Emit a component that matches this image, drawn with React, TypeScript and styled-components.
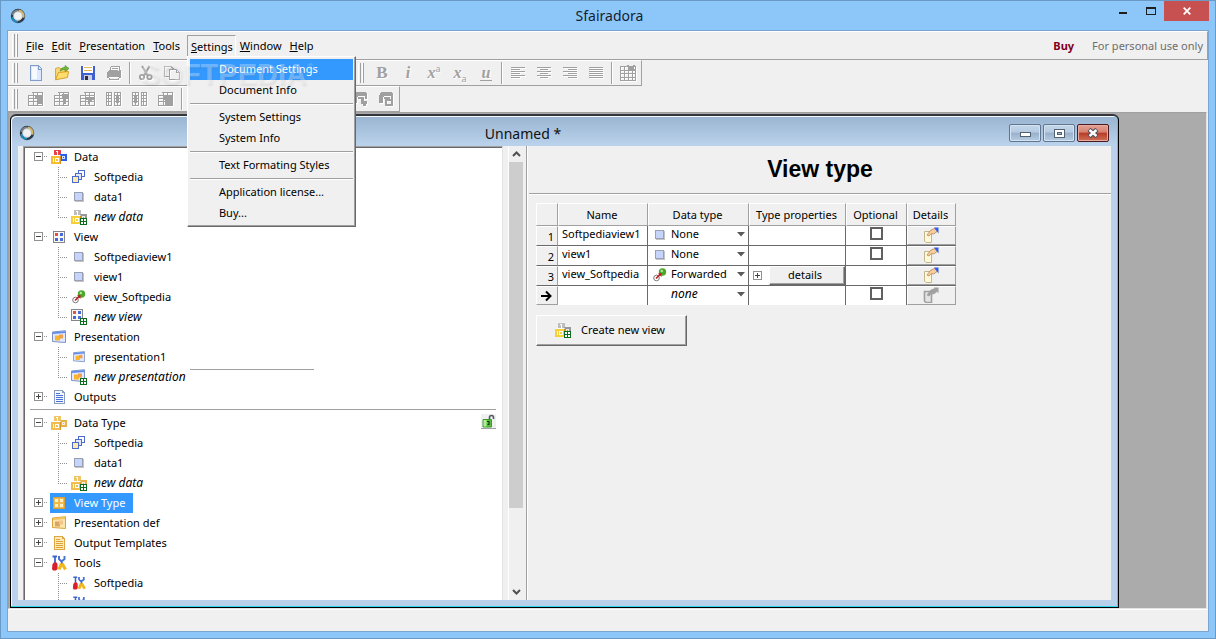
import React, { useState } from "react";
import styled, { createGlobalStyle, css } from "styled-components";

const UI_FONT = '"Noto Sans", "Open Sans", sans-serif';

const GlobalStyle = createGlobalStyle`
  * { box-sizing: border-box; }
  html, body { margin: 0; padding: 0; }
  body { font-family: ${UI_FONT}; font-size: 11px; line-height: 16px; color: #000; background: #8dc7fa; }
  button, input, select { font: inherit; color: inherit; margin: 0; border-radius: 0; }
  svg { display: block; flex: none; }
  ul { list-style: none; margin: 0; padding: 0; }
`;

/* ---------- application frame ---------- */

const Frame = styled.div`
  display: flex;
  flex-direction: column;
  height: 100vh;
  padding: 0 6px 6px;
  border: 1px solid #6a99c6;
  background: #8dc7fa;
  overflow: hidden;
`;

const TitleBar = styled.header`
  display: grid;
  grid-template-columns: 1fr auto 1fr;
  flex: none;
  height: 29px;
  padding-left: 3px;
`;

const TitleIcon = styled.div`
  display: flex;
  align-items: center;
`;

const AppTitle = styled.h1`
  margin: 0;
  font-size: 14px;
  font-weight: 400;
  line-height: 30px;
  color: #15222e;
`;

const CaptionButtons = styled.div`
  display: flex;
  justify-content: flex-end;
`;

const CaptionButton = styled.button<{ $close?: boolean }>`
  display: flex;
  align-items: center;
  justify-content: center;
  width: ${(p) => (p.$close ? 45 : 27)}px;
  height: 20px;
  padding: 0;
  border: 0;
  background: ${(p) => (p.$close ? "#c75050" : "transparent")};
`;

const Client = styled.div`
  display: flex;
  flex-direction: column;
  flex: 1;
  min-height: 0;
  border: 1px solid #7aa5cf;
  background: #f0f0f0;
`;

/* ---------- bars ---------- */

const Grip = styled.div`
  flex: none;
  width: 6px;
  margin: 2px 0 2px 4px;
  border: solid;
  border-width: 0 1px 0 1px;
  border-color: #fff #a0a0a0 #a0a0a0 #fff;
  background: linear-gradient(90deg, transparent 1px, #a0a0a0 1px, #a0a0a0 2px, #f0f0f0 2px, #f0f0f0 3px, #fff 3px);
`;

const MenuBar = styled.nav`
  position: relative;
  display: flex;
  flex: none;
  height: 29px;
  border-top: 1px solid #fff;
  border-bottom: 1px solid #a0a0a0;
  border-right: 1px solid #a0a0a0;
`;

const MenuList = styled.div`
  display: flex;
  flex: 1;
  align-items: center;
  padding-left: 4px;
`;

const MenuButton = styled.button<{ $open?: boolean }>`
  display: block;
  height: 22px;
  padding: ${(p) => (p.$open ? "0 2px 0 3px" : "0 3px")};
  border: 1px solid transparent;
  border-color: ${(p) => (p.$open ? "#a0a0a0 #fff #f0f0f0 #a0a0a0" : "transparent")};
  background: transparent;
  line-height: ${(p) => (p.$open ? 22 : 20)}px;
  white-space: nowrap;
  &::first-letter { text-decoration: underline; }
`;

const MenuHolder = styled.div`
  position: relative;
  margin-left: 3px;
`;

const Dropdown = styled.div`
  position: absolute;
  z-index: 5;
  top: 21px;
  left: 0;
  width: 169px;
  padding: 2px;
  border: 1px solid #fff;
  border-color: #fff #696969 #696969 #fff;
  box-shadow: inset -1px -1px 0 #a0a0a0;
  background: #f0f0f0;
`;

const DropItem = styled.button<{ $active?: boolean }>`
  display: block;
  width: 163px;
  height: 21px;
  padding: 0 0 0 29px;
  border: 0;
  background: ${(p) => (p.$active ? "#3399ff" : "transparent")};
  color: ${(p) => (p.$active ? "#fff" : "#000")};
  text-align: left;
  line-height: 20px;
  white-space: nowrap;
`;

const DropRule = styled.hr`
  height: 2px;
  margin: 2px 0;
  border: 0;
  border-top: 1px solid #a0a0a0;
  border-bottom: 1px solid #fff;
`;

const Watermark = styled.div`
  position: absolute;
  z-index: 6;
  top: 26px;
  left: 133px;
  font: bold 29px/32px "Liberation Sans", Arial, sans-serif;
  color: rgba(255, 255, 255, 0.3);
  text-shadow: 1px 2px 2px rgba(80, 80, 80, 0.1);
  pointer-events: none;
  sup { font-size: 9px; font-weight: 400; line-height: 0; vertical-align: 14px; }
`;

const MenuNotes = styled.div`
  display: flex;
  align-items: center;
  gap: 18px;
  padding-right: 4px;
  color: #6d6d6d;
`;

const BuyLink = styled.a`
  color: #800020;
  font-weight: 700;
  text-decoration: none;
`;

const BarRow = styled.div`
  display: flex;
  flex: none;
`;

const ToolBar = styled.div`
  display: flex;
  height: 26px;
  border: 1px solid #a0a0a0;
  border-width: 0 1px 1px 0;
  border-top: 1px solid #fff;
`;

const Tools = styled.div`
  display: flex;
  margin-left: 5px;
`;

const ToolButton = styled.button`
  display: flex;
  align-items: center;
  justify-content: center;
  width: 26px;
  height: 24px;
  padding: 0;
  border: 0;
  background: transparent;
`;

const ToolDivider = styled.span`
  width: 2px;
  height: 22px;
  margin: 1px 2px;
  border-left: 1px solid #a0a0a0;
  border-right: 1px solid #fff;
`;

/* ---------- document area ---------- */

const Desktop = styled.main`
  display: flex;
  flex: 1;
  min-height: 0;
  margin-right: 1px;
  padding: 1px 87px 0 1px;
  border: 1px solid #a0a0a0;
  border-color: #a0a0a0 #e3e3e3 #e3e3e3 #a0a0a0;
  background: #ababab;
`;

const ChildWindow = styled.section`
  display: flex;
  flex: 1;
  flex-direction: column;
  min-width: 0;
  padding: 0 7px 7px 7px;
  border: 1px solid #000;
  border-top: 2px solid #33373c;
  border-radius: 6px 6px 0 0;
  box-shadow: inset -1px -1px 0 #2cd4ec, inset 1px 1px 0 #f2f7fc;
  background: linear-gradient(#99b4d1, #b9d1ea 28px, #b9d1ea);
`;

const ChildTitle = styled.div`
  display: flex;
  flex: none;
  align-items: center;
  height: 30px;
  padding: 4px 2px 0 1px;
`;

const ChildName = styled.h2`
  flex: 1;
  margin: 0 0 0 2px;
  padding-top: 1px;
  font-size: 14px;
  line-height: 20px;
  font-weight: 400;
  text-align: center;
  color: #111;
`;

const GlassButtons = styled.div`
  display: flex;
  gap: 2px;
`;

const GlassButton = styled.button<{ $close?: boolean }>`
  display: flex;
  align-items: center;
  justify-content: center;
  width: 32px;
  height: 18px;
  padding: 0;
  border: 1px solid ${(p) => (p.$close ? "#4b1a20" : "#5f7590")};
  border-radius: 2px;
  box-shadow: inset 0 0 0 1px ${(p) => (p.$close ? "#e8aba0" : "#d5e3f1")};
  background: ${(p) =>
    p.$close
      ? "linear-gradient(#e3a194 0, #d68272 45%, #b93c25 50%, #cf6f58 100%)"
      : "linear-gradient(#c4d7ea 0, #b5cbe2 45%, #98b0cb 50%, #b6cde4 100%)"};
`;

const Panes = styled.div`
  display: flex;
  flex: 1;
  min-height: 0;
  padding-left: 5px;
  background: #f0f0f0;
`;

const TreePane = styled.div`
  position: relative;
  flex: none;
  width: 480px;
  overflow: hidden;
  border: 1px solid #a0a0a0;
  border-color: #a0a0a0 #e3e3e3 transparent #a0a0a0;
  border-bottom: 0;
  box-shadow: inset 1px 1px 0 #696969;
  background: #fff;
`;

const TreeSection = styled.ul<{ $first?: boolean }>`
  padding-left: 1px;
  ${(p) =>
    !p.$first &&
    css`
      margin: 2px 6px 0 6px;
      padding: 3px 0 0 0;
      border-top: 1px solid #a0a0a0;
      & > li { margin-left: -5px; }
    `}
`;

const TreeRow = styled.li<{ $child?: boolean }>`
  display: flex;
  height: 20px;
  padding-left: ${(p) => (p.$child ? 25 : 9)}px;
`;

const TreeButton = styled.button<{ $selected?: boolean; $italic?: boolean }>`
  display: flex;
  align-items: center;
  height: 20px;
  padding: 0 8px 0 0;
  border: 0;
  background: ${(p) => (p.$selected ? "#3399ff" : "transparent")};
  color: ${(p) => (p.$selected ? "#fff" : "#000")};
  font-style: ${(p) => (p.$italic ? "italic" : "normal")};
  font-size: ${(p) => (p.$italic ? 12 : 11)}px;
  white-space: nowrap;
`;

const TreeIcon = styled.span`
  display: flex;
  justify-content: center;
  width: 18px;
  margin-right: 6px;
`;

const Toggle = styled.button`
  display: flex;
  align-items: center;
  width: 16px;
  height: 20px;
  padding: 0;
  border: 0;
  background: transparent;
`;

const LockButton = styled.button`
  width: 15px;
  height: 15px;
  margin: 1px 0 0 auto;
  padding: 0;
  border: 0;
  border-bottom: 1px solid #a0a0a0;
  background: #f0f0f0;
`;

const StrayRule = styled.div`
  position: absolute;
  top: 222px;
  left: 166px;
  width: 124px;
  height: 1px;
  background: #a0a0a0;
`;

const ScrollBar = styled.div`
  display: flex;
  flex: none;
  flex-direction: column;
  width: 16px;
  margin-left: 5px;
  padding-right: 1px;
  border-left: 1px solid #fff;
`;

const ScrollButton = styled.button`
  display: flex;
  align-items: center;
  justify-content: center;
  flex: none;
  height: 16px;
  padding: 0;
  border: 0;
  background: transparent;
`;

const ScrollTrack = styled.div`
  flex: 1;
`;

const ScrollThumb = styled.div`
  height: 82%;
  background: #cdcdcd;
`;

const Detail = styled.div`
  flex: 1;
  min-width: 0;
  margin-left: 2px;
  padding-left: 2px;
  border-left: 1px solid #a0a0a0;
  box-shadow: inset 1px 0 0 #fff;
`;

const DetailHeading = styled.h3`
  height: 48px;
  margin: 0;
  border-bottom: 1px solid #a0a0a0;
  box-shadow: 0 1px 0 #fff;
  font: bold 23px/46px "Liberation Sans", Arial, sans-serif;
  text-align: center;
`;

const DetailBody = styled.div`
  padding: 9px 7px;
`;

/* ---------- data grid ---------- */

const Grid = styled.table`
  table-layout: fixed;
  width: 420px;
  border-collapse: separate;
  border-spacing: 0;
`;

const HeadCell = styled.th`
  height: 23px;
  padding: 0 2px 0 0;
  border: 1px solid #fff;
  border-color: #fff #a0a0a0 #a0a0a0 #fff;
  font-weight: 400;
  text-align: center;
  line-height: 20px;
  white-space: nowrap;
  background: #f0f0f0;
`;

const RowHead = styled.th`
  height: 20px;
  padding: 1px 3px 0 0;
  border: 1px solid #fff;
  border-color: #fff #a0a0a0 #696969 #fff;
  font-weight: 400;
  text-align: right;
  line-height: 16px;
  background: #f0f0f0;
  tr:last-child > & { height: 19px; padding-top: 0; border-bottom-color: #a0a0a0; }
`;

const Cell = styled.td<{ $plain?: boolean }>`
  height: 20px;
  padding: 0;
  border-right: ${(p) => (p.$plain ? "0" : "1px solid #696969")};
  border-bottom: 1px solid #696969;
  background: #fff;
  tr:last-child > & { height: 19px; border-bottom: 0; }
`;

const NameInput = styled.input`
  display: block;
  width: 100%;
  height: 19px;
  padding: 0 0 4px 4px;
  border: 0;
  outline: 0;
  background: transparent;
`;

const TypeField = styled.div`
  position: relative;
  display: flex;
  align-items: center;
  height: 19px;
  padding: 0 0 1px 4px;
  & > svg:last-child { position: absolute; right: 3px; top: 6px; pointer-events: none; }
`;

const TypeIcon = styled.span`
  display: flex;
  justify-content: center;
  width: 16px;
`;

const TypeSelect = styled.select<{ $italic?: boolean }>`
  flex: 1;
  min-width: 0;
  height: 18px;
  padding: 0 0 3px 3px;
  border: 0;
  outline: 0;
  appearance: none;
  background: transparent;
  font-style: ${(p) => (p.$italic ? "italic" : "normal")};
  font-size: ${(p) => (p.$italic ? 12 : 11)}px;
`;

const PropsField = styled.div`
  display: flex;
  align-items: center;
  justify-content: space-between;
  height: 19px;
  padding-left: 4px;
`;

const PropsToggle = styled.button`
  padding: 0;
  border: 0;
  background: transparent;
`;

const RaisedButton = styled.button<{ $large?: boolean }>`
  display: flex;
  align-items: center;
  justify-content: center;
  gap: 9px;
  width: ${(p) => (p.$large ? 151 : 76)}px;
  height: ${(p) => (p.$large ? 31 : 19)}px;
  padding: 0 4px 2px 0;
  border: 1px solid #fff;
  border-color: #fff #696969 #696969 #fff;
  box-shadow: inset -1px -1px 0 #a0a0a0;
  background: #f0f0f0;
  white-space: nowrap;
`;

const Check = styled.input`
  display: block;
  width: 13px;
  height: 13px;
  margin: 0 auto 4px;
  border: 2px solid #606060;
  appearance: none;
  background: #fff;
  &:checked { background: #606060; }
`;

const CellButton = styled.button`
  display: flex;
  align-items: center;
  justify-content: center;
  width: 100%;
  height: 19px;
  padding: 0 2px 2px 0;
  border: 1px solid #fff;
  border-color: #fff #a0a0a0 #a0a0a0 #fff;
  background: #f0f0f0;
`;

const CreateArea = styled.div`
  margin-top: 10px;
`;

const StatusBar = styled.footer`
  flex: none;
  height: 22px;
  border-top: 1px solid #fff;
`;

/* ---------- icons ---------- */

const Svg = ({ w = 16, h = 16, children, crisp = true }: { w?: number; h?: number; crisp?: boolean; children: React.ReactNode }) => (
  <svg width={w} height={h} viewBox={`0 0 ${w} ${h}`} shapeRendering={crisp ? "crispEdges" : "auto"} fill="none" aria-hidden="true">
    {children}
  </svg>
);

const RingIcon = () => (
  <Svg crisp={false}>
    <circle cx="8" cy="8" r="5.600" stroke="#2d3c4a" strokeWidth="3.200" />
    <path d="M2.600 7A5.600 5.600 0 0 1 8 2.400" stroke="#7b8288" strokeWidth="2" />
    <path d="M8.500 2.400A5.600 5.600 0 0 1 13.400 9.600" stroke="#d9b866" strokeWidth="2" />
    <path d="M2.500 9A5.600 5.600 0 0 0 8 13.500" stroke="#1f8fc4" strokeWidth="2" />
    <circle cx="8" cy="8" r="4.300" fill="#f0f1f3" stroke="#c9ced2" />
  </Svg>
);

const DISABLED = "#a0a0a0";

const Embossed = styled.span`
  display: block;
  filter: drop-shadow(1px 1px 0 #fff);
`;

const NewIcon = () => (
  <Svg>
    <path d="M2.500 .500H10.500L13.500 3.500V15.500H2.500Z" fill="#dce8ff" stroke="#7f9ccb" />
    <path d="M4 2h5v12h-5z" fill="#f6faff" />
    <path d="M10 1h1v3h2v1h-3z" fill="#7f9ccb" />
  </Svg>
);

const OpenIcon = () => (
  <Svg crisp={false}>
    <path d="M1.500 14.500V3.500L5 2.500L7 4H13V7" fill="#f6d775" stroke="#d9a93a" />
    <path d="M1.500 14.800L4.500 7.500L14.500 6.500L13.500 12.500Z" fill="#ffdc6e" stroke="#d9a020" />
    <path d="M6 6C7 3 9 2 11 2.500V.500L15 3.500L11 6.500V4.500C9 4.500 8 5 6 6Z" fill="#6db83a" stroke="#4d8a22" strokeWidth=".600" />
  </Svg>
);

const SaveIcon = () => (
  <Svg>
    <path d="M1 1H14L15 2V15H1Z" fill="#3f5fd0" />
    <path d="M3 1H13V8H3Z" fill="#fff" />
    <path d="M4 2.500H12M4 5.500H12" stroke="#e2b64a" />
    <path d="M4 10H12V15H4Z" fill="#c9cfdf" />
    <path d="M5 11H8V15H5Z" fill="#2a2f3f" />
  </Svg>
);

const PrintIcon = () => (
  <Svg>
    <path d="M5 1h9v1h-9zM4 2h1v3h-1zM13 2h1v4h-1zM6 3h6v1h-6zM3 5h9v1h-9zM2 6h12v1h-12zM1 7h14v6h-2v-1h-10v1h-2zM13 5h2v2h-2zM3 13h10v2h-10z" fill={DISABLED} />
    <path d="M4 13h8v1h-8z" fill="#f0f0f0" />
  </Svg>
);

const CutIcon = () => (
  <Svg crisp={false}>
    <path d="M4 1L9.500 10M11.500 1L6.500 10" stroke={DISABLED} strokeWidth="2" />
    <circle cx="4" cy="12" r="2.200" stroke={DISABLED} strokeWidth="1.800" />
    <circle cx="11.500" cy="12" r="2.200" stroke={DISABLED} strokeWidth="1.800" />
  </Svg>
);

const CopyIcon = () => (
  <Svg>
    <path d="M4.500 11.500H.500V1.500H7L9.500 4V4.500M7 4.500H12L15.500 7.500V14.500H5.500V4.500H7M12 4.500V7.500H15" stroke={DISABLED} />
  </Svg>
);

const ALIGN: Record<string, number[][]> = {
  left: [[0, 14], [0, 9], [0, 14], [0, 9], [0, 14], [0, 9]],
  center: [[0, 14], [3, 8], [0, 14], [3, 8], [0, 14], [3, 8]],
  right: [[0, 14], [5, 9], [0, 14], [5, 9], [0, 14], [5, 9]],
  justify: [[0, 14], [0, 14], [0, 14], [0, 14], [0, 14], [0, 14]],
};

const AlignIcon = ({ kind }: { kind: string }) => (
  <Svg w={14} h={12}>
    {ALIGN[kind].map(([x, w], i) => (
      <rect key={i} x={x} y={i * 2} width={w} height="1" fill={DISABLED} />
    ))}
  </Svg>
);

const TableIcon = () => (
  <Svg>
    <path d="M.500 1.500H15.500V15.500H.500ZM0 5.500H16M0 8.500H16M0 12.500H16M4.500 2V16M8.500 2V16M12.500 2V16" stroke={DISABLED} />
    <path d="M7 0h2v1h1v1h2v-1h1v-1h2v2h-1v2h1v2h-2v-1h-2v1h-3v-2h1v-2h-2z" fill={DISABLED} />
  </Svg>
);

const GridIcon = ({ kind }: { kind: number }) => {
  const overlay = [
    "M7 4h7v3h-7zM9 8h5v5h-5z",
    "M8 3h6v4h-2v6h-3v-6h-1z",
    "M6 6h8v3h-2v2h-2v2h-2v-4h-2z",
    "",
    "",
    "M6 5h9v3h-1v6h-7v-5h-1z",
  ][kind];
  if (kind === 3 || kind === 4) {
    const narrow = kind === 3 ? 0 : 9;
    const wide = kind === 3 ? 8 : 0;
    return (
      <Svg>
        <path d={`M${narrow + 0.5} 1.500h5v13h-5zM${narrow} 4.500h5M${narrow} 7.500h5M${narrow} 10.500h5M${narrow + 2.5} 1v13`} stroke={DISABLED} />
        <path d={`M${wide + 0.5} 1.500h6v13h-6zM${wide} 4.500h6M${wide} 7.500h6M${wide} 10.500h6M${wide + 3.5} 1v13`} stroke={DISABLED} />
        <path d={`M${wide + 2} 5h3v7h-3z`} fill={DISABLED} />
      </Svg>
    );
  }
  return (
    <Svg>
      <path d="M3.500 1.500H14.500V14.500H.500V4.500H14.500M0 7.500H14M0 10.500H14M5.500 2V14M9.500 2V14" stroke={DISABLED} />
      <path d={overlay} fill={DISABLED} />
    </Svg>
  );
};

const ExportIcon = ({ box }: { box?: boolean }) => (
  <Svg>
    <path d="M3 1h11v1h1v6h-2v-3h-7v1h-1v6h-4v-8h1v-2h1z" fill={DISABLED} />
    <path d="M6 6h6v2h-6z" fill={DISABLED} />
    {box ? <path d="M7 8h8v7h-8zM9 10v3h4v-3z" fill={DISABLED} fillRule="evenodd" /> : <path d="M9 6h3v4h3v3h-1v2h-3v-2h-2z" fill={DISABLED} />}
  </Svg>
);

const LetterIcon = styled.span<{ $kind: string }>`
  display: block;
  font: italic bold 16px/18px "Liberation Serif", serif;
  color: #a0a0a0;
  text-shadow: 1px 1px 0 #fff;
  ${(p) => p.$kind === "bold" && "font-style: normal; font-size: 17px;"}
  ${(p) => p.$kind === "underline" && "border-bottom: 1px solid #a0a0a0; line-height: 14px; padding: 0 2px;"}
  sup, sub { font: 9px/0 "Noto Sans", sans-serif; }
`;

const Plus = ({ x = 9, y = 9 }) => (
  <g>
    <path d={`M${x} ${y}h7v7h-7z`} fill="#0a6b1c" />
    <path d={`M${x + 1} ${y + 1}h5v5h-5z`} fill="#fff" />
    <path d={`M${x + 3} ${y + 1}h1v5h-1zM${x + 1} ${y + 3}h5v1h-5z`} fill="#0a6b1c" />
  </g>
);

const cubeTones = {
  colour: ["#e8404a", "#2f5fe6", "#f7bd2e", "#d68f14"],
  grey: ["#bdbdbd", "#989898", "#f7cf3a", "#c9961d"],
  gold: ["#f1c566", "#e9b14a", "#f3bd4e", "#d59a2c"],
};

const CubesIcon = ({ tone, plus }: { tone: keyof typeof cubeTones; plus?: boolean }) => {
  const [a, b, c, edge] = cubeTones[tone];
  return (
    <Svg w={18} h={18}>
      <path d="M4 2h6l1-1v6h-7z" fill={a} />
      <path d="M4 2l1-1h6l-1 1z" fill="#fff" fillOpacity=".4" />
      <path d="M7 3h1v4h-1zM6 3h1v1h-1z" fill="#fff" />
      <path d="M10 6h7v7h-7z" fill={b} />
      <path d="M12 8h3v3h-3zM13 9v1h1v-1z" fill="#fff" fillOpacity=".8" fillRule="evenodd" />
      <path d="M1 8h9v8h-9z" fill={c} />
      <path d="M1 8l1-1h9l-1 1z" fill="#fff" fillOpacity=".5" />
      <path d="M10 8l1-1v8l-1 1z" fill={edge} />
      <path d="M3 10h1v4h-1zM5 10h4v4h-4zM6 11v2h2v-2z" fill="#fff" fillRule="evenodd" />
      {plus && <Plus x={10} y={10} />}
    </Svg>
  );
};

const StackIcon = () => (
  <Svg w={14} h={14}>
    <path d="M6.500 .500h6v6h-6z" fill="#fff" stroke="#4a6ccc" />
    <path d="M3.500 3.500h6v6h-6z" fill="#dfe8fd" stroke="#4a6ccc" />
    <path d="M.500 6.500h6v6h-6z" fill="#ffe9b0" stroke="#4a6ccc" />
  </Svg>
);

const CellIcon = () => (
  <Svg w={10} h={10}>
    <path d="M1 1h9v9h-9z" fill="#c4c4c4" />
    <path d="M.500 .500h8v8h-8z" fill="#c6d3fb" stroke="#9aa0b4" />
  </Svg>
);

const ViewIcon = ({ gold, plus }: { gold?: boolean; plus?: boolean }) => {
  const paper = gold ? "#f0b94c" : "#fbf8f4";
  const edge = gold ? "#dca038" : "#85858d";
  const tiles = gold ? ["#fff0c4", "#fff0c4", "#fff0c4"] : ["#e0504a", "#4468d8", "#4a70e0"];
  const size = plus ? 16 : 12;
  return (
    <Svg w={size} h={size}>
      <rect x="0" y="0" width="12" height="12" fill={edge} />
      <rect x="1" y="1" width="10" height="10" fill={paper} />
      <path d="M2 2h3v3h-3z" fill={tiles[0]} />
      <path d="M7 2h3v3h-3zM2 7h3v3h-3z" fill={tiles[1]} />
      <path d="M7 7h3v3h-3z" fill={tiles[2]} />
      {plus && <Plus />}
    </Svg>
  );
};

const PresIcon = ({ small, gold, plus }: { small?: boolean; gold?: boolean; plus?: boolean }) => (
  <svg width={small ? 12 : plus ? 16 : 14} height={small ? 12 : plus ? 16 : 14} viewBox={plus ? "0 0 16 16" : "0 0 14 14"} fill="none" aria-hidden="true">
    <path d="M.500 2L13.500 .700V12.500L.500 11.500Z" fill={gold ? "#fbe5a9" : "#dfe9ff"} stroke={gold ? "#dba23a" : "#7d93c4"} />
    <path d="M1 2.200L13 1.200V3L1 4Z" fill={gold ? "#f3c25a" : "#5f8af0"} />
    <path d="M3 5.500h5v5h-5z" fill={gold ? "#dca366" : "#fbb32a"} />
    <path d="M7 4.500h4v4h-4z" fill={gold ? "#efc58a" : "#f2a04b"} />
    {plus && <Plus />}
  </svg>
);

const PageIcon = ({ gold }: { gold?: boolean }) => {
  const line = gold ? "#e0a33a" : "#4a6fd6";
  return (
    <Svg w={14} h={14}>
      <path d="M2 0h8l3 3v11h-11z" fill={gold ? "#dfa643" : "#8a9cc0"} />
      <path d="M3 1h7v2h2v10h-9z" fill={gold ? "#fdebb8" : "#f4f8ff"} />
      <path d="M4 3h4v1h-4zM4 5h7v1h-7zM4 7h7v1h-7zM4 9h7v1h-7zM4 11h7v1h-7z" fill={line} />
    </Svg>
  );
};

const LinkIcon = () => (
  <Svg w={14} h={14} crisp={false}>
    <circle cx="9.500" cy="4" r="3.700" fill="#4aa82a" />
    <circle cx="8.800" cy="3" r="1.200" fill="#b7e59b" />
    <circle cx="3.500" cy="10" r="2.800" fill="#fff" stroke="#7a7a7a" />
    <path d="M3 10.500L7.500 6" stroke="#c01c1c" strokeWidth="1.600" />
    <path d="M5 5.500L8.500 5V9Z" fill="#c01c1c" />
  </Svg>
);

const ToolsIcon = ({ small }: { small?: boolean }) => (
  <svg width={small ? 14 : 16} height={small ? 14 : 16} viewBox="0 0 16 16" fill="none" aria-hidden="true">
    <path d="M1.500 1.500H6M4 1V8" stroke="#3d66c8" strokeWidth="1.800" />
    <path d="M1.500 9L3 7.500H5.500L6.500 9V14L5 15.500H2L1 14Z" fill="#d81f2a" />
    <path d="M8 1V4L10.500 6.500L13.500 4V1M10.800 6V9" stroke="#4a73d4" strokeWidth="2" />
    <path d="M10.500 8.500L8 14.500M11 8.500L14.500 14.500" stroke="#f2b61f" strokeWidth="3.200" />
  </svg>
);

const LockIcon = () => (
  <Svg w={15} h={14} crisp={false}>
    <path d="M8.500 5V3.500A2 2 0 0 1 12.500 3.500V5" stroke="#4f5a66" strokeWidth="1.600" />
    <path d="M2 5.500h8.500v7.500h-8.500z" fill="#5cc03f" stroke="#3a9a2a" />
    <path d="M2.500 6h3v6.500h-3z" fill="#b4e8a0" />
    <path d="M6 7.500h2v3h-1.500" stroke="#123d0c" strokeWidth="1.200" />
  </Svg>
);

const HandIcon = ({ off }: { off?: boolean }) => (
  <Svg crisp={false}>
    <path d="M1.500 4.500H8.500V15.500H3L1.500 14Z" fill={off ? "#e4e4e4" : "#fff9dc"} stroke={off ? DISABLED : "#c3b68a"} strokeWidth={off ? 1.6 : 1} />
    <path d="M4 8L8 3L12 1.500L14 4.500L11 6.800L8 6.800L6 9Z" fill={off ? DISABLED : "#f6cf9f"} stroke={off ? DISABLED : "#b98650"} strokeWidth=".800" />
    <path d="M11 .500H15.500V6.500Z" fill={off ? DISABLED : "#2f5df0"} />
  </Svg>
);

const ExpandBox = ({ open, stub }: { open?: boolean; stub?: boolean }) => (
  <Svg w={stub ? 15 : 10} h={10}>
    <rect x="0" y="0" width="9" height="9" fill="#919191" />
    <rect x="1" y="1" width="7" height="7" fill="#fff" />
    <path d={open ? "M2 4h5v1h-5z" : "M2 4h5v1h-5zM4 2h1v5h-1z"} fill="#444" />
    {stub && <path d="M10 4h1v1h-1zM12 4h1v1h-1z" fill="#919191" />}
  </Svg>
);

const Branch = ({ last }: { last?: boolean }) => (
  <Svg w={20} h={20}>
    <path d={last ? "M8.500 0V10" : "M8.500 0V20"} stroke="#919191" strokeDasharray="1 1" />
    <path d="M8 10.500H18" stroke="#919191" strokeDasharray="1 1" />
  </Svg>
);

const Chevron = ({ down }: { down?: boolean }) => (
  <Svg w={9} h={6} crisp={false}>
    <path d={down ? "M1 1L4.500 4.500L8 1" : "M1 5L4.500 1.500L8 5"} stroke="#505050" strokeWidth="2" />
  </Svg>
);

/* ---------- content ---------- */

type Node = { label: string; icon: React.ReactNode; child?: boolean; last?: boolean; open?: boolean; italic?: boolean; lock?: boolean };

const upper: Node[] = [
  { label: "Data", icon: <CubesIcon tone="colour" />, open: true },
  { label: "Softpedia", icon: <StackIcon />, child: true },
  { label: "data1", icon: <CellIcon />, child: true },
  { label: "new data", icon: <CubesIcon tone="grey" plus />, child: true, last: true, italic: true },
  { label: "View", icon: <ViewIcon />, open: true },
  { label: "Softpediaview1", icon: <CellIcon />, child: true },
  { label: "view1", icon: <CellIcon />, child: true },
  { label: "view_Softpedia", icon: <LinkIcon />, child: true },
  { label: "new view", icon: <ViewIcon plus />, child: true, last: true, italic: true },
  { label: "Presentation", icon: <PresIcon />, open: true },
  { label: "presentation1", icon: <PresIcon small />, child: true },
  { label: "new presentation", icon: <PresIcon plus />, child: true, last: true, italic: true },
  { label: "Outputs", icon: <PageIcon /> },
];

const lower: Node[] = [
  { label: "Data Type", icon: <CubesIcon tone="gold" />, open: true, lock: true },
  { label: "Softpedia", icon: <StackIcon />, child: true },
  { label: "data1", icon: <CellIcon />, child: true },
  { label: "new data", icon: <CubesIcon tone="gold" plus />, child: true, last: true, italic: true },
  { label: "View Type", icon: <ViewIcon gold /> },
  { label: "Presentation def", icon: <PresIcon gold /> },
  { label: "Output Templates", icon: <PageIcon gold /> },
  { label: "Tools", icon: <ToolsIcon />, open: true },
  { label: "Softpedia", icon: <ToolsIcon small />, child: true },
  { label: "", icon: <ToolsIcon small />, child: true },
];

const TreeItems = ({ nodes, selected, onSelect }: { nodes: Node[]; selected: string; onSelect: (s: string) => void }) => (
  <>
    {nodes.map((n, i) => (
      <TreeRow key={i} $child={n.child}>
        {n.child ? (
          <Branch last={n.last} />
        ) : (
          <Toggle aria-label={`${n.open ? "Collapse" : "Expand"} ${n.label}`}>
            <ExpandBox open={n.open} stub />
          </Toggle>
        )}
        <TreeButton $selected={n.label === selected} $italic={n.italic} onClick={() => onSelect(n.label)}>
          <TreeIcon>{n.icon}</TreeIcon>
          {n.label}
        </TreeButton>
        {n.lock && (
          <LockButton aria-label="Unlock types">
            <LockIcon />
          </LockButton>
        )}
      </TreeRow>
    ))}
  </>
);

const columns: [string, number][] = [
  ["", 22],
  ["Name", 90],
  ["Data type", 101],
  ["Type properties", 97],
  ["Optional", 61],
  ["Details", 49],
];

const rows = [
  { name: "Softpediaview1", type: "None", icon: <CellIcon />, optional: true },
  { name: "view1", type: "None", icon: <CellIcon />, optional: true },
  { name: "view_Softpedia", type: "Forwarded", icon: <LinkIcon />, details: true },
  { name: "", type: "none", icon: null, optional: true, fresh: true },
];

const dropGroups = [
  ["Document Settings", "Document Info"],
  ["System Settings", "System Info"],
  ["Text Formating Styles"],
  ["Application license...", "Buy..."],
];

export default function App() {
  const [selected, setSelected] = useState("View Type");
  const [active, setActive] = useState("Document Settings");

  return (
    <>
      <GlobalStyle />
      <Frame>
        <TitleBar>
          <TitleIcon><RingIcon /></TitleIcon>
          <AppTitle>Sfairadora</AppTitle>
          <CaptionButtons>
            <CaptionButton aria-label="Minimize">
              <Svg w={9} h={10}><path d="M0 6h8v2h-8z" fill="#1e1e1e" /></Svg>
            </CaptionButton>
            <CaptionButton aria-label="Maximize">
              <Svg w={10} h={8}><path d="M0 0h10v8h-10zM1 2v5h8v-5z" fill="#1e1e1e" fillRule="evenodd" /></Svg>
            </CaptionButton>
            <CaptionButton $close aria-label="Close">
              <Svg w={8} h={8} crisp={false}><path d="M.700 .700L7.300 7.300M7.300 .700L.700 7.300" stroke="#fff" strokeWidth="1.800" /></Svg>
            </CaptionButton>
          </CaptionButtons>
        </TitleBar>

        <Client>
          <MenuBar>
            <Grip />
            <MenuList>
              {["File", "Edit", "Presentation", "Tools"].map((m) => (
                <MenuButton key={m}>{m}</MenuButton>
              ))}
              <MenuHolder>
                <MenuButton $open aria-expanded="true">Settings</MenuButton>
                <Dropdown role="menu">
                  {dropGroups.map((group, i) => (
                    <React.Fragment key={i}>
                      {i > 0 && <DropRule />}
                      {group.map((item) => (
                        <DropItem key={item} role="menuitem" $active={item === active} onMouseEnter={() => setActive(item)}>
                          {item}
                        </DropItem>
                      ))}
                    </React.Fragment>
                  ))}
                </Dropdown>
              </MenuHolder>
              {["Window", "Help"].map((m) => (
                <MenuButton key={m}>{m}</MenuButton>
              ))}
            </MenuList>
            <MenuNotes>
              <BuyLink href="#buy">Buy</BuyLink>
              <span>For personal use only</span>
            </MenuNotes>
            <Watermark>SOFTPEDIA<sup>®</sup></Watermark>
          </MenuBar>

          <BarRow>
            <ToolBar>
              <Grip />
              <Tools>
                <ToolButton aria-label="New"><NewIcon /></ToolButton>
                <ToolButton aria-label="Open"><OpenIcon /></ToolButton>
                <ToolButton aria-label="Save"><SaveIcon /></ToolButton>
                <ToolButton aria-label="Print"><Embossed><PrintIcon /></Embossed></ToolButton>
                <ToolDivider />
                <ToolButton aria-label="Cut"><Embossed><CutIcon /></Embossed></ToolButton>
                <ToolButton aria-label="Copy"><Embossed><CopyIcon /></Embossed></ToolButton>
                <ToolButton aria-label="Paste" />
                <ToolDivider />
                <ToolButton aria-label="Undo" />
                <ToolButton aria-label="Redo" />
                <ToolDivider />
                <ToolButton aria-label="Find" />
                <ToolButton aria-label="Replace" />
                <ToolButton aria-label="Go to" />
              </Tools>
            </ToolBar>
            <ToolBar>
              <Grip />
              <Tools>
                <ToolButton aria-label="Bold"><LetterIcon $kind="bold">B</LetterIcon></ToolButton>
                <ToolButton aria-label="Italic"><LetterIcon $kind="italic">i</LetterIcon></ToolButton>
                <ToolButton aria-label="Superscript"><LetterIcon $kind="sup">x<sup>a</sup></LetterIcon></ToolButton>
                <ToolButton aria-label="Subscript"><LetterIcon $kind="sub">x<sub>a</sub></LetterIcon></ToolButton>
                <ToolButton aria-label="Underline"><LetterIcon $kind="underline">u</LetterIcon></ToolButton>
                <ToolDivider />
                {["left", "center", "right", "justify"].map((k) => (
                  <ToolButton key={k} aria-label={`Align ${k}`}><Embossed><AlignIcon kind={k} /></Embossed></ToolButton>
                ))}
                <ToolDivider />
                <ToolButton aria-label="Insert table"><Embossed><TableIcon /></Embossed></ToolButton>
              </Tools>
            </ToolBar>
          </BarRow>

          <BarRow>
            <ToolBar>
              <Grip />
              <Tools>
                {[0, 1, 2, 3, 4, 5].map((k) => (
                  <ToolButton key={k} aria-label={`Table action ${k + 1}`}><Embossed><GridIcon kind={k} /></Embossed></ToolButton>
                ))}
                <ToolDivider />
                {[0, 1, 2, 3, 4, 5].map((k) => (
                  <ToolButton key={k} aria-label={`Cell action ${k + 1}`} />
                ))}
                <ToolDivider />
                <ToolButton aria-label="Import"><Embossed><ExportIcon /></Embossed></ToolButton>
                <ToolButton aria-label="Export"><Embossed><ExportIcon box /></Embossed></ToolButton>
              </Tools>
            </ToolBar>
          </BarRow>

          <Desktop>
            <ChildWindow>
              <ChildTitle>
                <RingIcon />
                <ChildName>Unnamed *</ChildName>
                <GlassButtons>
                  <GlassButton aria-label="Minimize document">
                    <Svg w={11} h={8}><path d="M.500 3.500h10v4h-10z" fill="#fff" stroke="#53606f" /></Svg>
                  </GlassButton>
                  <GlassButton aria-label="Maximize document">
                    <Svg w={11} h={9}><path d="M.500 .500h10v8h-10z" fill="#fff" stroke="#53606f" /><path d="M3.500 3.500h4v2h-4z" fill="#9fb6d0" stroke="#53606f" /></Svg>
                  </GlassButton>
                  <GlassButton $close aria-label="Close document">
                    <Svg w={12} h={10} crisp={false}>
                      <path d="M2 1.500L10 8.500M10 1.500L2 8.500" stroke="#51505c" strokeWidth="4.500" />
                      <path d="M2.500 2L9.500 8M9.500 2L2.500 8" stroke="#fff" strokeWidth="2.400" />
                    </Svg>
                  </GlassButton>
                </GlassButtons>
              </ChildTitle>
              <Panes>
                <TreePane>
                  <TreeSection $first>
                    <TreeItems nodes={upper} selected={selected} onSelect={setSelected} />
                  </TreeSection>
                  <TreeSection>
                    <TreeItems nodes={lower} selected={selected} onSelect={setSelected} />
                  </TreeSection>
                  <StrayRule />
                </TreePane>
                <ScrollBar>
                  <ScrollButton aria-label="Scroll up"><Chevron /></ScrollButton>
                  <ScrollTrack><ScrollThumb /></ScrollTrack>
                  <ScrollButton aria-label="Scroll down"><Chevron down /></ScrollButton>
                </ScrollBar>
                <Detail>
                  <DetailHeading>View type</DetailHeading>
                  <DetailBody>
                    <Grid>
                      <colgroup>
                        {columns.map(([label, width]) => (
                          <col key={label} width={width} />
                        ))}
                      </colgroup>
                      <thead>
                        <tr>
                          {columns.map(([label]) => (
                            <HeadCell key={label} scope="col">{label}</HeadCell>
                          ))}
                        </tr>
                      </thead>
                      <tbody>
                        {rows.map((r, i) => (
                          <tr key={i}>
                            <RowHead scope="row">
                              {r.fresh ? (
                                <Svg w={17} h={12} crisp={false}>
                                  <path d="M4 6H13M9 1.500L13.500 6L9 10.500" stroke="#000" strokeWidth="2" />
                                </Svg>
                              ) : (
                                i + 1
                              )}
                            </RowHead>
                            <Cell><NameInput aria-label={`Name of view ${i + 1}`} defaultValue={r.name} /></Cell>
                            <Cell>
                              <TypeField>
                                <TypeIcon>{r.icon}</TypeIcon>
                                <TypeSelect $italic={r.fresh} aria-label={`Data type of view ${i + 1}`} defaultValue={r.type}>
                                  <option>{r.type}</option>
                                </TypeSelect>
                                <Svg w={8} h={5} crisp={false}><path d="M0 0H8L4 4.500Z" fill="#5a5a5a" /></Svg>
                              </TypeField>
                            </Cell>
                            <Cell>
                              {r.details && (
                                <PropsField>
                                  <PropsToggle aria-label="Expand properties"><ExpandBox /></PropsToggle>
                                  <RaisedButton>details</RaisedButton>
                                </PropsField>
                              )}
                            </Cell>
                            <Cell>{r.optional && <Check type="checkbox" aria-label={`View ${i + 1} is optional`} />}</Cell>
                            <Cell $plain>
                              <CellButton aria-label={`Details of view ${i + 1}`}><HandIcon off={r.fresh} /></CellButton>
                            </Cell>
                          </tr>
                        ))}
                      </tbody>
                    </Grid>
                    <CreateArea>
                      <RaisedButton $large><CubesIcon tone="grey" plus />Create new view</RaisedButton>
                    </CreateArea>
                  </DetailBody>
                </Detail>
              </Panes>
            </ChildWindow>
          </Desktop>
          <StatusBar />
        </Client>
      </Frame>
    </>
  );
}
